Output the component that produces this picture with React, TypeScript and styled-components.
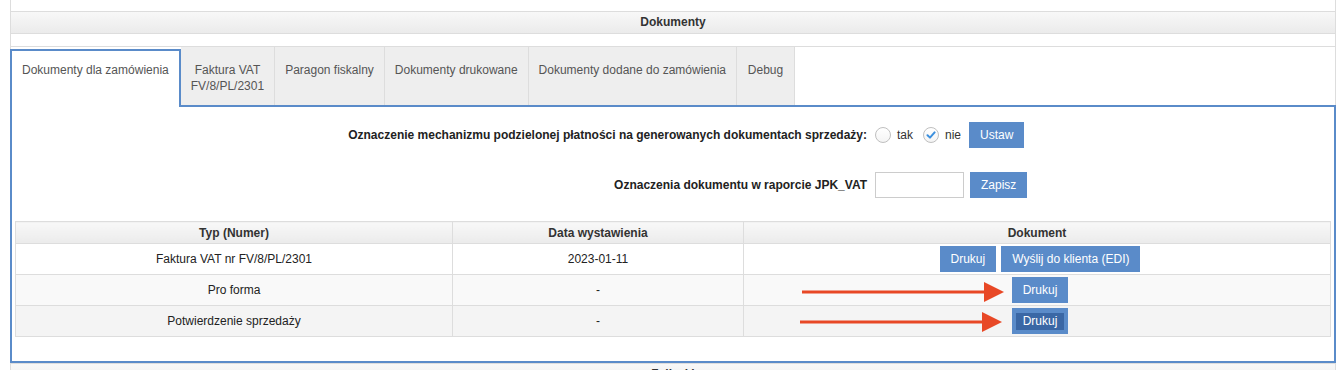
import React from 'react';
import styled, { createGlobalStyle } from 'styled-components';

const Global = createGlobalStyle`
  html, body { margin: 0; padding: 0; background: #fff; overflow: hidden; }
  body { font-family: "Liberation Sans", Arial, Helvetica, sans-serif; font-size: 12px; color: #333; }
`;

const BLUE = '#5a8bc9';

const Page = styled.div`
  margin-left: 10px;
  width: 1326px;
  box-sizing: border-box;
  border-left: 1px solid #ddd;
  border-right: 1px solid #ddd;
  padding-top: 11px;
`;

const SectionHeader = styled.div`
  height: 21px;
  line-height: 21px;
  border-top: 1px solid #ddd;
  border-bottom: 1px solid #ddd;
  background: linear-gradient(#f8f8f8, #ebebeb);
  text-align: center;
  font-weight: bold;
  color: #333;
`;

const Spacer = styled.div<{ $h: number }>`
  height: ${(p) => p.$h}px;
`;

const TabBar = styled.div`
  display: flex;
  margin: 0 -1px;
  height: 58px;
  border-top: 1px solid #ddd;
  align-items: stretch;
`;

const Tab = styled.div<{ $active?: boolean; $minW?: number }>`
  box-sizing: border-box;
  text-align: center;
  line-height: 16px;
  color: #555;
  white-space: nowrap;
  min-width: ${(p) => (p.$minW ? `${p.$minW}px` : 'auto')};
  ${(p) =>
    p.$active
      ? `
    background: #fff;
    border: 2px solid ${BLUE};
    border-bottom: none;
    margin-top: 2px;
    margin-bottom: -2px;
    height: 58px;
    padding: 11px 10px 0;
    position: relative;
    z-index: 1;
  `
      : `
    background: #eee;
    border-right: 1px solid #ddd;
    padding: 15px 10px 0;
  `}
`;

const Panel = styled.div`
  margin: 0 -1px;
  border: 2px solid ${BLUE};
  background: #fff;
  padding: 0 1px 24px;
`;

const FormGrid = styled.div`
  display: grid;
  grid-template-columns: 854px auto;
  grid-auto-rows: 26px;
  column-gap: 8px;
  row-gap: 24px;
  padding-top: 15px;
  margin-bottom: 23px;
  align-items: center;
`;

const Label = styled.div`
  text-align: right;
  font-weight: bold;
  color: #222;
  white-space: nowrap;
`;

const Field = styled.div`
  display: flex;
  align-items: center;
`;

const RadioCircle = styled.span`
  box-sizing: border-box;
  width: 16px;
  height: 16px;
  border-radius: 50%;
  border: 1px solid #bfbfbf;
  background: linear-gradient(#fff, #f4f4f4);
  display: inline-flex;
  align-items: center;
  justify-content: center;
  margin-right: 6px;
`;

const RadioText = styled.span`
  color: #333;
  margin-right: 10px;
`;

const TextInput = styled.input`
  box-sizing: border-box;
  width: 89px;
  height: 26px;
  border: 1px solid #ccc;
  margin: 0 6px 0 0;
  padding: 0 4px;
  font: inherit;
`;

const Button = styled.button<{ $ml?: number }>`
  box-sizing: border-box;
  height: 26px;
  border: none;
  background: ${BLUE};
  color: #fff;
  font-family: "Liberation Sans", Arial, sans-serif;
  font-size: 12px;
  padding: 0 4px;
  margin-left: ${(p) => p.$ml ?? 0}px;
  display: inline-flex;
  align-items: center;
  cursor: pointer;
`;

const ButtonLabel = styled.span<{ $focused?: boolean }>`
  display: inline-block;
  padding: 0 7px;
  line-height: 17px;
  background: ${(p) => (p.$focused ? '#3a67a5' : 'transparent')};
`;

const TableWrap = styled.div`
  padding: 0 2px;
`;

const Table = styled.table`
  width: 100%;
  border-collapse: collapse;
  table-layout: fixed;
`;

const Th = styled.th`
  height: 21px;
  padding: 0;
  border: 1px solid #ddd;
  background: linear-gradient(#f8f8f8, #ebebeb);
  font-weight: bold;
  color: #333;
  text-align: center;
`;

const Tr = styled.tr<{ $bg: string }>`
  background: ${(p) => p.$bg};
`;

const Td = styled.td<{ $offset?: boolean }>`
  height: 30px;
  padding: 0 0 0 ${(p) => (p.$offset ? 6 : 0)}px;
  border: 1px solid #ddd;
  text-align: center;
  color: #222;
  position: relative;
`;

const Actions = styled.div`
  display: inline-flex;
  gap: 5px;
  vertical-align: middle;
`;

const ArrowSvg = styled.svg<{ $left: number; $top: number }>`
  position: absolute;
  left: ${(p) => p.$left}px;
  top: ${(p) => p.$top}px;
`;

const Arrow = ({ left, top }: { left: number; top: number }) => (
  <ArrowSvg $left={left} $top={top} width="204" height="22" viewBox="0 0 204 22">
    <line x1="0" y1="11" x2="186" y2="11" stroke="#e84826" strokeWidth="3" />
    <polygon points="182,1 202,11 182,21" fill="#e84826" />
  </ArrowSvg>
);

const Check = () => (
  <svg width="10" height="10" viewBox="0 0 10 10">
    <path d="M1.5 5.2 L4 7.6 L8.6 2.4" fill="none" stroke="#3b8fdd" strokeWidth="2" strokeLinecap="round" strokeLinejoin="round" />
  </svg>
);

export default function App() {
  return (
    <>
      <Global />
      <Page>
        <SectionHeader>Dokumenty</SectionHeader>
        <Spacer $h={12} />
        <TabBar>
          <Tab $active>Dokumenty dla zamówienia</Tab>
          <Tab $minW={94}>
            Faktura VAT
            <br />
            FV/8/PL/2301
          </Tab>
          <Tab>Paragon fiskalny</Tab>
          <Tab>Dokumenty drukowane</Tab>
          <Tab>Dokumenty dodane do zamówienia</Tab>
          <Tab $minW={58}>Debug</Tab>
        </TabBar>
        <Panel>
          <FormGrid>
            <Label>Oznaczenie mechanizmu podzielonej płatności na generowanych dokumentach sprzedaży:</Label>
            <Field>
              <RadioCircle />
              <RadioText>tak</RadioText>
              <RadioCircle>
                <Check />
              </RadioCircle>
              <RadioText>nie</RadioText>
              <Button $ml={-2}>
                <ButtonLabel>Ustaw</ButtonLabel>
              </Button>
            </Field>
            <Label>Oznaczenia dokumentu w raporcie JPK_VAT</Label>
            <Field>
              <TextInput type="text" />
              <Button>
                <ButtonLabel>Zapisz</ButtonLabel>
              </Button>
            </Field>
          </FormGrid>
          <TableWrap>
            <Table>
              <colgroup>
                <col style={{ width: '437px' }} />
                <col style={{ width: '291px' }} />
                <col />
              </colgroup>
              <thead>
                <tr>
                  <Th>Typ (Numer)</Th>
                  <Th>Data wystawienia</Th>
                  <Th>Dokument</Th>
                </tr>
              </thead>
              <tbody>
                <Tr $bg="#fff">
                  <Td>Faktura VAT nr FV/8/PL/2301</Td>
                  <Td>2023-01-11</Td>
                  <Td $offset>
                    <Actions>
                      <Button>
                        <ButtonLabel>Drukuj</ButtonLabel>
                      </Button>
                      <Button>
                        <ButtonLabel>Wyślij do klienta (EDI)</ButtonLabel>
                      </Button>
                    </Actions>
                  </Td>
                </Tr>
                <Tr $bg="#f9f9f9">
                  <Td>Pro forma</Td>
                  <Td>-</Td>
                  <Td $offset>
                    <Arrow left={58} top={6} />
                    <Actions>
                      <Button>
                        <ButtonLabel>Drukuj</ButtonLabel>
                      </Button>
                    </Actions>
                  </Td>
                </Tr>
                <Tr $bg="#f4f4f4">
                  <Td>Potwierdzenie sprzedaży</Td>
                  <Td>-</Td>
                  <Td $offset>
                    <Arrow left={56} top={5} />
                    <Actions>
                      <Button>
                        <ButtonLabel $focused>Drukuj</ButtonLabel>
                      </Button>
                    </Actions>
                  </Td>
                </Tr>
              </tbody>
            </Table>
          </TableWrap>
        </Panel>
        <SectionHeader>Zaliczki</SectionHeader>
      </Page>
    </>
  );
}
